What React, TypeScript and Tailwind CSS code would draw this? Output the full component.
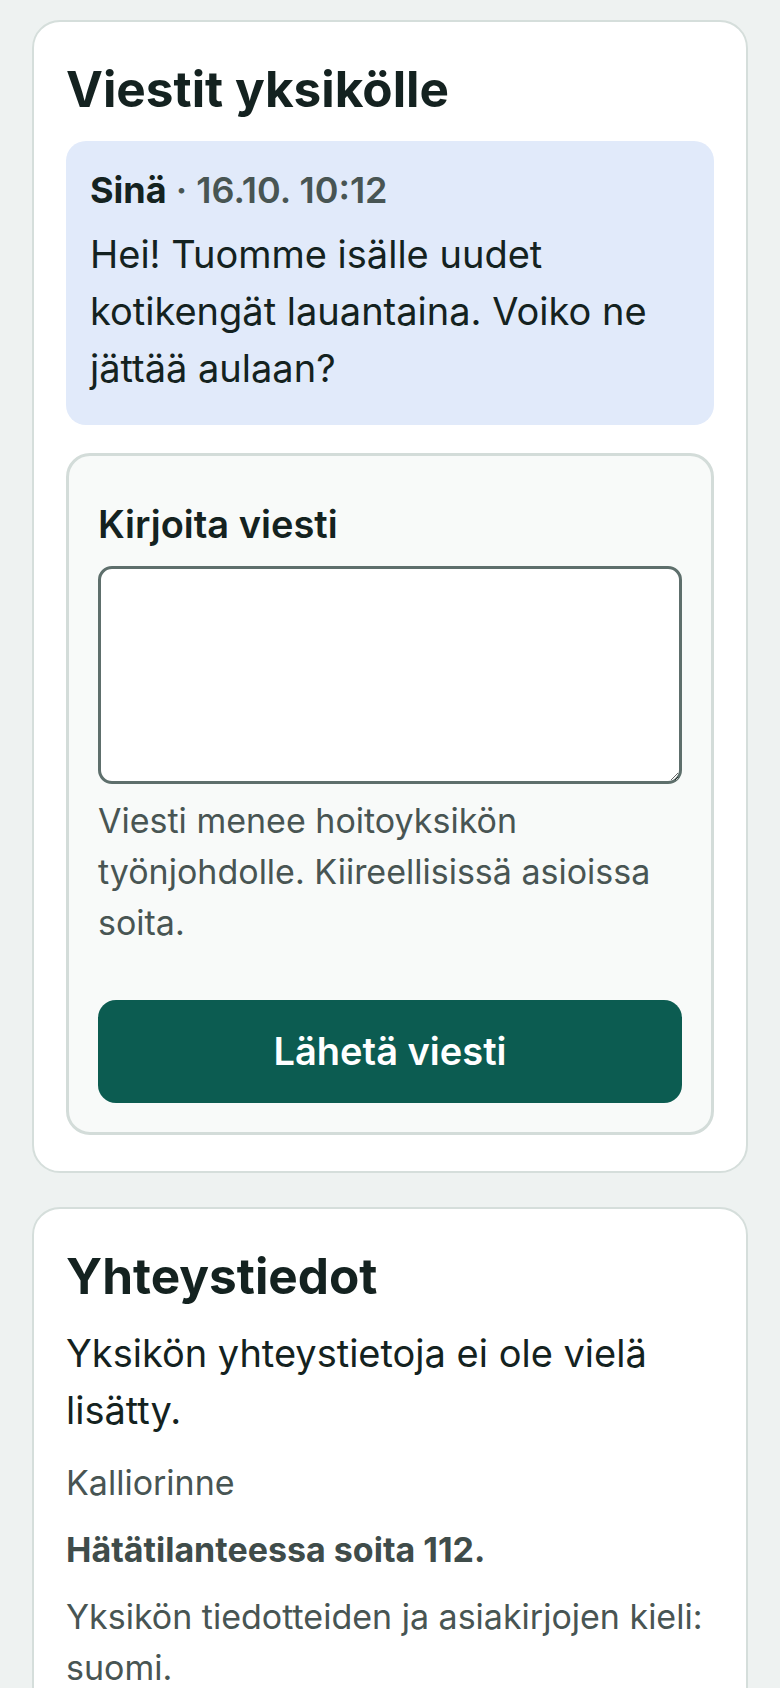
import { useState } from "react";

const font = { fontFamily: "Inter, 'Noto Sans', sans-serif" };

function MessageBubble() {
  return (
    <div className="mt-[22px] rounded-[20px] bg-[#e1eafa] px-6 pt-6 pb-7">
      <p className="text-[36px] font-semibold leading-[1.4] text-[#485553]">
        <span className="font-bold text-[#142220]">Sinä</span> · 16.10. 10:12
      </p>
      <p className="mt-2.5 text-[38px] leading-[1.5] text-[#142220]">
        Hei! Tuomme isälle uudet kotikengät lauantaina. Voiko ne jättää aulaan?
      </p>
    </div>
  );
}

function MessageForm() {
  const [text, setText] = useState("");

  return (
    <form
      className="mt-7 rounded-[24px] border-[3px] border-[#d3dcd9] bg-[#f8faf9] px-[29px] pt-10 pb-[29px]"
      onSubmit={(e) => e.preventDefault()}
    >
      <label
        htmlFor="viesti"
        className="block text-[38px] font-semibold leading-[1.5] text-[#142220]"
      >
        Kirjoita viesti
      </label>
      <textarea
        id="viesti"
        value={text}
        onChange={(e) => setText(e.target.value)}
        className="mt-[13px] block h-[218px] w-full rounded-[14px] border-[3px] border-[#5e6f6c] bg-white p-4 text-[38px] text-[#142220] outline-none"
      />
      <p className="mt-[11px] text-[34px] leading-[1.5] text-[#485553]">
        Viesti menee hoitoyksikön työnjohdolle. Kiireellisissä asioissa soita.
      </p>
      <button
        type="submit"
        className="mt-[52px] flex h-[103px] w-full items-center justify-center rounded-[18px] bg-[#0c5c51] text-[38px] font-semibold text-white"
      >
        Lähetä viesti
      </button>
    </form>
  );
}

function Card({ title, children }: { title: string; children: React.ReactNode }) {
  return (
    <section className="rounded-[28px] border-2 border-[#d5dedb] bg-white px-8 pt-[38px] pb-9">
      <h2 className="text-[49.5px] font-bold leading-[1.2] text-[#142220]">{title}</h2>
      {children}
    </section>
  );
}

export default function App() {
  return (
    <div
      className="flex min-h-screen flex-col gap-[34px] bg-[#eef2f1] px-8 pt-5 pb-8"
      style={font}
    >
      <Card title="Viestit yksikölle">
        <MessageBubble />
        <MessageForm />
      </Card>

      <Card title="Yhteystiedot">
        <p className="mt-[19px] text-[38px] leading-[1.5] text-[#142220]">
          Yksikön yhteystietoja ei ole vielä lisätty.
        </p>
        <p className="mt-[18px] text-[34px] leading-[1.5] text-[#485553]">Kalliorinne</p>
        <p className="mt-4 text-[34px] font-bold leading-[1.5] text-[#3f4c4a]">
          Hätätilanteessa soita 112.
        </p>
        <p className="mt-4 text-[34px] leading-[1.5] text-[#485553]">
          Yksikön tiedotteiden ja asiakirjojen kieli: suomi.
        </p>
      </Card>
    </div>
  );
}
